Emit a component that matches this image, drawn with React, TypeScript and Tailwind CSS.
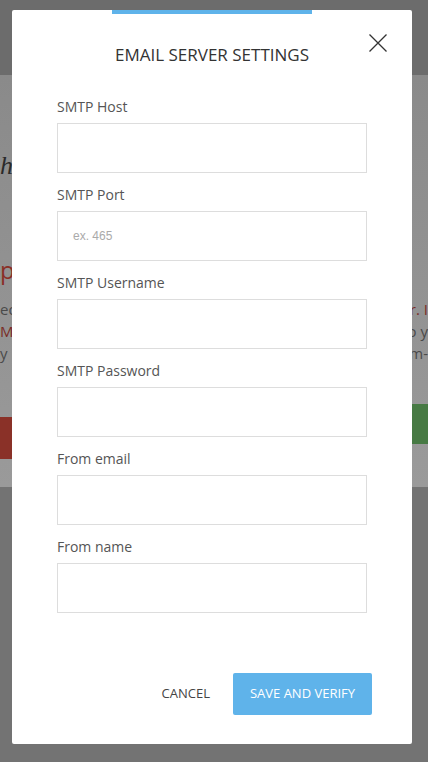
import { useState } from "react";

const fields = [
  { label: "SMTP Host", placeholder: "" },
  { label: "SMTP Port", placeholder: "ex. 465" },
  { label: "SMTP Username", placeholder: "" },
  { label: "SMTP Password", placeholder: "" },
  { label: "From email", placeholder: "" },
  { label: "From name", placeholder: "" },
];

function Backdrop() {
  // dimmed page behind the dialog, only the edges show through
  return (
    <div className="flex min-h-[762px] flex-col bg-[#737373] font-['Open_Sans',sans-serif]">
      <div className="h-[75px] bg-[#6c6c6c]" />
      <div className="flex h-[412px] flex-col bg-gradient-to-b from-[#8a8a8a] to-[#9a9a9a]">
        <p className="mt-[76px] font-['Liberation_Serif',serif] text-[26px] italic leading-[30px] text-[#2a2a2a]">
          hi
        </p>
        <p className="mt-[74px] text-[24px] leading-[30px] text-[#8a2f27]">p</p>
        <div className="mt-[13px] flex flex-col text-[15px] leading-[22px]">
          <div className="flex justify-between">
            <span className="text-[#4a4a4a]">ed</span>
            <span className="text-[#7a2c26]">r. I</span>
          </div>
          <div className="flex justify-between">
            <span className="text-[#7a2c26]">M</span>
            <span className="text-[#4a4a4a]">o y</span>
          </div>
          <div className="flex justify-between">
            <span className="text-[#4a4a4a]">y</span>
            <span className="text-[#4a4a4a]">m-</span>
          </div>
        </div>
        <div className="mt-[40px] flex items-start justify-between">
          <div className="mt-[13px] h-[42px] w-[60px] bg-[#8a3128]" />
          <div className="h-[40px] w-[60px] bg-[#477a44]" />
        </div>
      </div>
    </div>
  );
}

export default function App() {
  const [values, setValues] = useState<Record<string, string>>({});

  return (
    <div className="relative min-h-[762px] overflow-hidden">
      <Backdrop />
      <div className="absolute inset-0">
        <div className="relative ml-[12px] mt-[10px] w-[400px] rounded-[2px] bg-white font-['Open_Sans',sans-serif]">
          <div className="mx-auto h-[4px] w-[200px] bg-[#5fb3ea]" />
          <h2 className="pt-[30px] text-center text-[17px] leading-[22px] text-[#333]">EMAIL SERVER SETTINGS</h2>
          <button className="absolute right-[25px] top-[24px] h-[18px] w-[18px]" aria-label="Close">
            <svg viewBox="0 0 18 18" width="18" height="18" fill="none" stroke="#333" strokeWidth="1.3">
              <path d="M0.5 0.5 L17.5 17.5 M17.5 0.5 L0.5 17.5" />
            </svg>
          </button>

          <div className="mt-[30px] flex flex-col gap-[11px] px-[45px]">
            {fields.map((f) => (
              <div key={f.label}>
                <label className="mb-[6px] block pt-[1px] text-[14px] leading-[20px] text-[#555]">{f.label}</label>
                <input
                  value={values[f.label] ?? ""}
                  onChange={(e) => setValues({ ...values, [f.label]: e.target.value })}
                  placeholder={f.placeholder}
                  className="block h-[50px] w-full border border-[#ddd] px-[15px] font-['Liberation_Sans',Arial,sans-serif] text-[12px] text-[#555] outline-none placeholder:text-[#aaa]"
                />
              </div>
            ))}
          </div>

          <div className="mt-[60px] flex items-center justify-end gap-[23px] pb-[29px] pr-[40px]">
            <button className="pl-[1px] text-[13px] text-[#444]">CANCEL</button>
            <button className="h-[42px] w-[139px] rounded-[2px] bg-[#5fb3ea] text-[13px] text-white">SAVE AND VERIFY</button>
          </div>
        </div>
      </div>
    </div>
  );
}
